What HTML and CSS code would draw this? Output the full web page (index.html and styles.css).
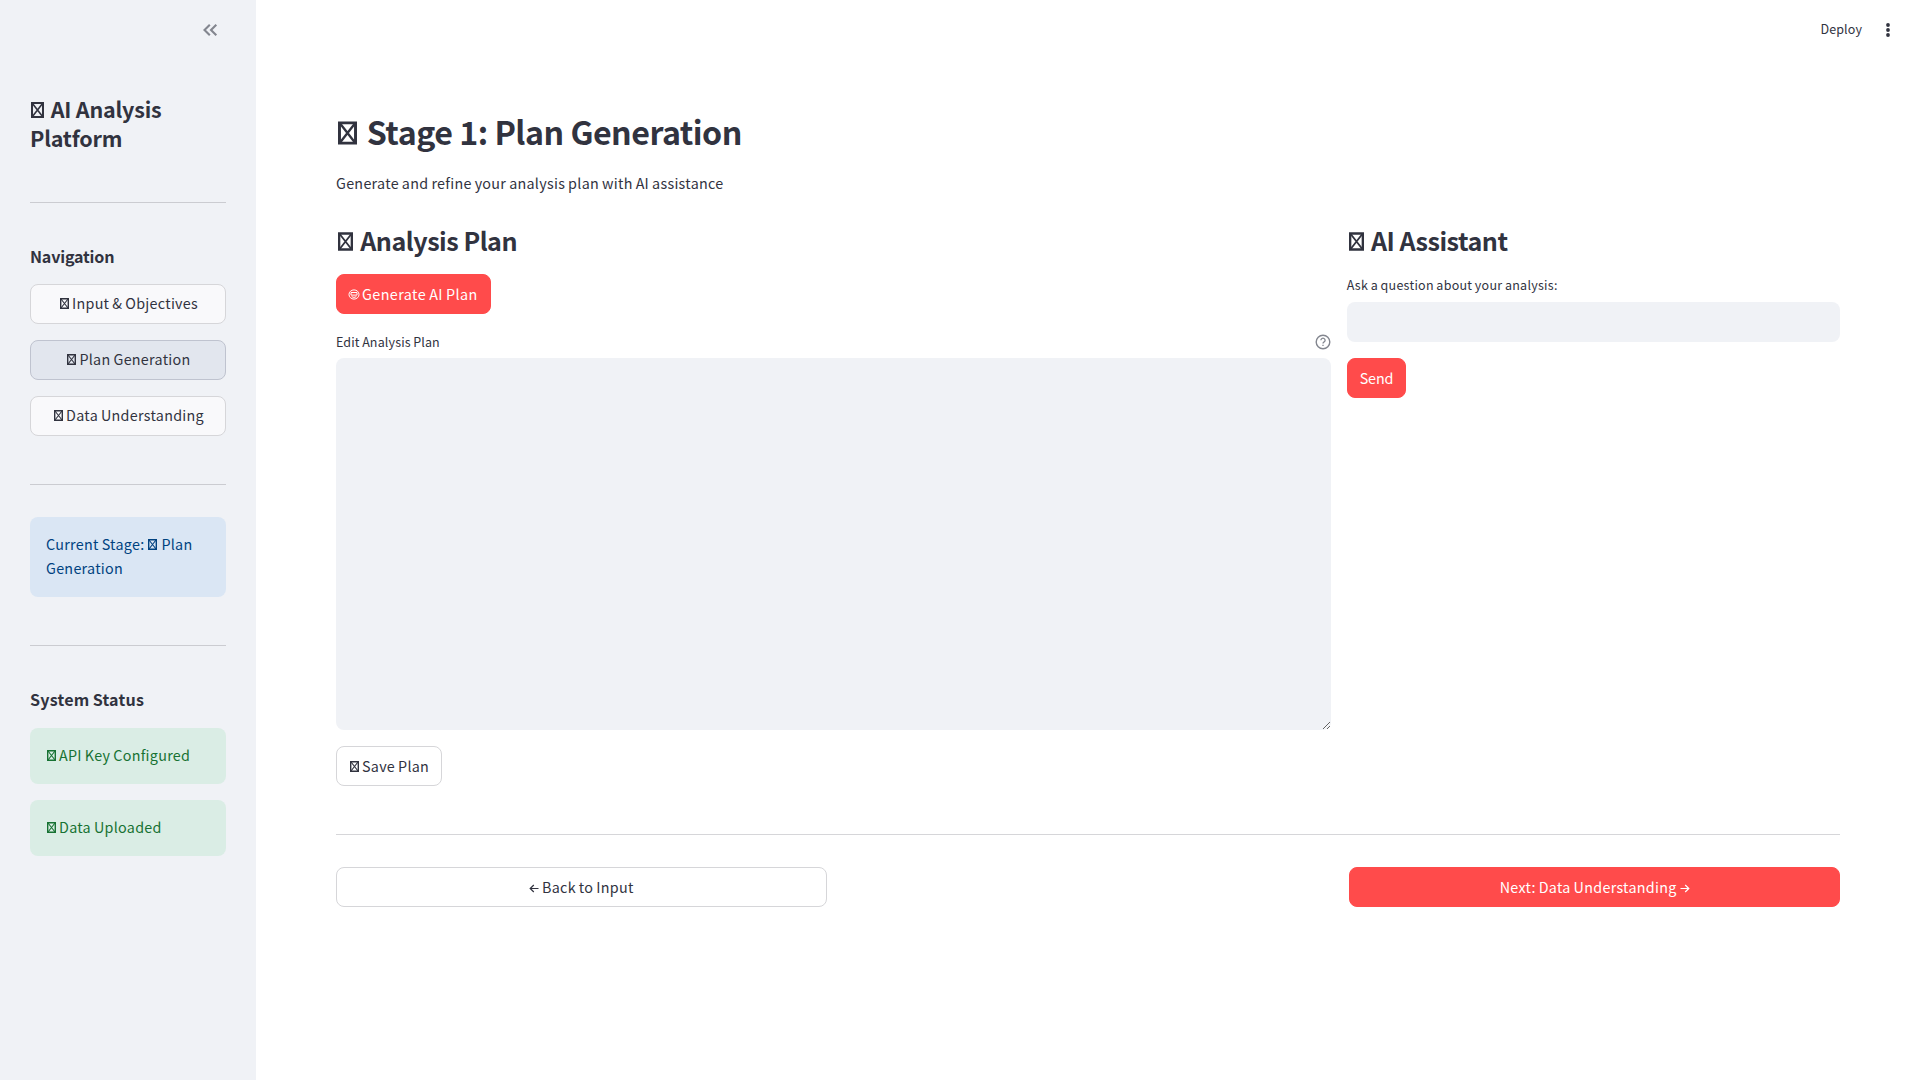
FILE: index.html
```html
<!DOCTYPE html>
<html lang="en">
<head>
<meta charset="utf-8">
<title>AI Analysis Platform</title>
<link rel="stylesheet" href="styles.css">
</head>
<body>
<svg width="0" height="0" class="defs"><symbol id="box" viewBox="0 0 9 11"><path d="M.7.7h7.6v9.6H.7z" fill="none" stroke="currentColor" stroke-width="1.4"/><path d="M1 1l7 9M8 1L1 10" fill="none" stroke="currentColor" stroke-width="1.1"/></symbol></svg>
<div class="app">
  <aside class="sidebar">
    <div class="collapse"><svg width="24" height="24" viewBox="0 0 24 24"><path d="M11.8 6.7L6.5 12l5.3 5.3M18.3 6.7L13 12l5.3 5.3" fill="none" stroke="currentColor" stroke-width="2.1"/></svg></div>
    <h2 class="brand"><svg class="box"><use href="#box"/></svg> AI Analysis<br>Platform</h2>
    <hr class="rule rule-brand">
    <h3 class="section">Navigation</h3>
    <nav class="nav">
      <button class="btn"><svg class="box"><use href="#box"/></svg> <span>Input &amp; Objectives</span></button>
      <button class="btn active"><svg class="box"><use href="#box"/></svg> <span>Plan Generation</span></button>
      <button class="btn"><svg class="box"><use href="#box"/></svg> <span>Data Understanding</span></button>
    </nav>
    <hr class="rule">
    <div class="alert info"><span>Current Stage:</span> <svg class="box"><use href="#box"/></svg> <span>Plan</span><br><span>Generation</span></div>
    <hr class="rule rule-stage">
    <h3 class="section status">System Status</h3>
    <div class="alerts">
      <div class="alert success"><svg class="box"><use href="#box"/></svg> <span>API Key Configured</span></div>
      <div class="alert success"><svg class="box"><use href="#box"/></svg> <span>Data Uploaded</span></div>
    </div>
  </aside>
  <main class="main">
    <header class="toolbar"><span>Deploy</span><svg width="20" height="20" viewBox="0 0 20 20" fill="currentColor"><circle cx="10" cy="5" r="1.9"/><circle cx="10" cy="10" r="1.9"/><circle cx="10" cy="15" r="1.9"/></svg></header>
    <div class="content">
      <h1 class="title"><svg class="box"><use href="#box"/></svg> <span>Stage 1: Plan Generation</span></h1>
      <p class="lead">Generate and refine your analysis plan with AI assistance</p>
      <div class="columns">
        <section class="plan">
          <h2 class="heading"><svg class="box"><use href="#box"/></svg> <span>Analysis Plan</span></h2>
          <button class="btn primary generate"><svg class="face" viewBox="0 0 12 11"><path d="M1 5.5a5 4.6 0 0 1 10 0a5 4.6 0 0 1-10 0M3 3.5h6v2.6H3zM3.7 7.7q2.3 1.4 4.6 0" fill="none" stroke="currentColor"/></svg> <span>Generate AI Plan</span></button>
          <div class="label label-plan"><span>Edit Analysis Plan</span><svg width="16" height="16" viewBox="0 0 16 16" fill="none" stroke="currentColor"><circle cx="8" cy="8" r="6.8" stroke-width="1.4"/><path d="M5.9 6.2a2.1 2 0 1 1 3.2 1.7Q8 8.5 8 9.6M8 10.8v1.3" stroke-width="1.3"/></svg></div>
          <textarea class="editor"></textarea>
          <button class="btn"><svg class="box"><use href="#box"/></svg> <span>Save Plan</span></button>
        </section>
        <section class="assistant">
          <h2 class="heading"><svg class="box"><use href="#box"/></svg> <span>AI Assistant</span></h2>
          <div class="label label-ask">Ask a question about your analysis:</div>
          <input class="question" type="text">
          <button class="btn primary send">Send</button>
        </section>
      </div>
      <hr class="rule">
      <div class="footer">
        <button class="btn"><svg class="arrow" viewBox="0 0 10 9"><path d="M9.5 4.5H1.2M4.8 1L1.2 4.5L4.8 8" fill="none" stroke="currentColor" stroke-width="1.2"/></svg><span>Back to Input</span></button>
        <span></span>
        <button class="btn primary"><span>Next: Data Understanding</span><svg class="arrow" viewBox="0 0 10 9"><path d="M.5 4.5h8.3M5.2 1l3.6 3.5L5.2 8" fill="none" stroke="currentColor" stroke-width="1.2"/></svg></button>
      </div>
    </div>
  </main>
</div>
</body>
</html>
```
FILE: styles.css
```css
* { box-sizing: border-box; }
body {
  margin: 0;
  background: #fff;
  color: #31333f;
  font: 14.33px/24px "Noto Sans CJK SC", sans-serif;
  letter-spacing: .28px;
  word-spacing: -.5px;
}
.defs { display: block; position: absolute; }
h1, h2, h3, p { margin: 0; font-weight: 700; }
.app { display: flex; height: 1080px; overflow: hidden; }
.box { width: 9px; height: 11px; margin-left: 1px; flex: none; }
.sidebar {
  width: 256px;
  padding: 0 30px;
  background: #f0f2f6;
}
.collapse {
  height: 94px;
  padding: 18px 4px 0;
  text-align: right;
  letter-spacing: 0;
  color: #83868f;
}
.brand { font-size: 21.5px; line-height: 29px; letter-spacing: -.2px; word-spacing: 0; }
.brand .box { width: 13px; height: 16px; margin: 0 2px 0 1px; }
.rule {
  height: 1px;
  margin: 48px 0 32px;
  border: 0;
  background: #cbccd1;
}
.main .rule { background: #d6d6d9; }
.sidebar .rule-brand { margin: 50px 0 40px; }
.sidebar .rule-stage { margin-bottom: 40px; }
.section {
  margin-bottom: 14px;
  font-size: 16.1px;
  line-height: 27px;
  letter-spacing: -.2px;
}
.status { margin-bottom: 15px; letter-spacing: .2px; }
.nav, .alerts { display: flex; flex-direction: column; gap: 16px; }
.btn {
  display: inline-flex;
  align-items: center;
  justify-content: center;
  gap: 3px;
  height: 40px;
  padding: 0 12px;
  border: 1px solid #d6d6d9;
  border-radius: 8px;
  background: #fff;
  color: inherit;
  font: inherit;
  letter-spacing: inherit;
  word-spacing: inherit;
}
.sidebar .btn { padding: 0 11px 2px 12px; background: #f9f9fb; }
.sidebar .active { background: #e2e6ee; border-color: #bfc3cf; }
.primary { background: #ff4b4b; border-color: #ff4b4b; color: #fff; }
.generate { gap: 2px; padding: 0 12px 0 11px; letter-spacing: .42px; }
.send { letter-spacing: -.1px; }
.face { width: 12px; height: 11px; }
.arrow { width: 10px; height: 9px; margin-top: 2px; }
.alert { padding: 15px 16px 17px; border-radius: 8px; }
.info { background: #dae6f4; color: #004280; }
.info .box { margin: 0 1px; }
.success { background: #daede5; color: #177233; }
.main { flex: 1; }
.toolbar {
  display: flex;
  align-items: center;
  justify-content: flex-end;
  gap: 16px;
  height: 60px;
  padding-right: 22px;
  font-size: 12.5px;
  letter-spacing: .1px;
}
.toolbar span { padding-bottom: 2px; }
.content { padding: 42px 80px 0; }
.title { font-size: 32.2px; line-height: 58px; letter-spacing: -.52px; word-spacing: 0; }
.title .box { width: 19px; height: 24px; margin: 0 3px 0 2px; }
.lead { margin: 11px 0 17px; font-weight: 400; letter-spacing: .28px; }
.columns { display: flex; gap: 16px; }
.plan { width: 994.67px; }
.assistant { width: 493.33px; }
.heading { padding: 9px 0 15px; font-size: 25.1px; line-height: 38px; letter-spacing: -.48px; word-spacing: 0; }
.heading .box { width: 15px; height: 19px; margin: 0 2px; }
.label { display: flex; justify-content: space-between; align-items: center; height: 28px; font-size: 12.5px; letter-spacing: .14px; }
.label-plan { height: 44px; padding-top: 12px; }
.label-plan span { padding-bottom: 1px; }
.label-ask { padding-bottom: 7px; letter-spacing: .26px; }
.label svg { color: #83868f; }
.editor {
  display: block;
  width: 100%;
  height: 372px;
  margin-bottom: 16px;
  border: 0;
  border-radius: 8px;
  background: #f0f2f6;
  resize: vertical;
}
.question {
  display: block;
  width: 100%;
  height: 40px;
  margin-bottom: 16px;
  border: 0;
  border-radius: 8px;
  background: #f0f2f6;
}
.footer { display: grid; grid-template-columns: repeat(3, 1fr); gap: 16px; }
```
